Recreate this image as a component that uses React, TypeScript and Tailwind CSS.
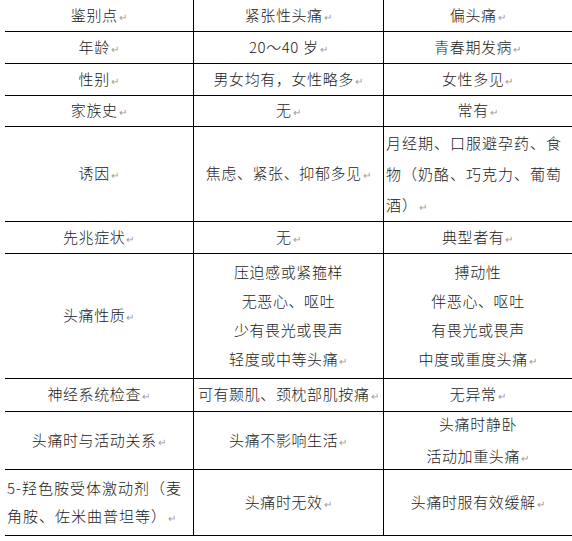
const mark = <span className="text-[10px] text-[#9a9a9a] ml-[1px]">↵</span>;

type Cell = { lines: string[]; align?: "center" | "left"; lh?: string };
type Row = { h: string; cells: Cell[] };

const rows: Row[] = [
    { h: "h-[32px]", cells: [{ lines: ["鉴别点"] }, { lines: ["紧张性头痛"] }, { lines: ["偏头痛"] }] },
    { h: "h-[32px]", cells: [{ lines: ["年龄"] }, { lines: ["20～40 岁"] }, { lines: ["青春期发病"] }] },
    { h: "h-[32px]", cells: [{ lines: ["性别"] }, { lines: ["男女均有，女性略多"] }, { lines: ["女性多见"] }] },
    { h: "h-[31px]", cells: [{ lines: ["家族史"] }, { lines: ["无"] }, { lines: ["常有"] }] },
    {
        h: "h-[95px]",
        cells: [
            { lines: ["诱因"] },
            { lines: ["焦虑、紧张、抑郁多见"] },
            { lines: ["月经期、口服避孕药、食", "物（奶酪、巧克力、葡萄", "酒）"], align: "left", lh: "leading-[31px]" },
        ],
    },
    { h: "h-[32px]", cells: [{ lines: ["先兆症状"] }, { lines: ["无"] }, { lines: ["典型者有"] }] },
    {
        h: "h-[125px]",
        cells: [
            { lines: ["头痛性质"] },
            { lines: ["压迫感或紧箍样", "无恶心、呕吐", "少有畏光或畏声", "轻度或中等头痛"], lh: "leading-[29px]" },
            { lines: ["搏动性", "伴恶心、呕吐", "有畏光或畏声", "中度或重度头痛"], lh: "leading-[29px]" },
        ],
    },
    { h: "h-[33px]", cells: [{ lines: ["神经系统检查"] }, { lines: ["可有颞肌、颈枕部肌按痛"] }, { lines: ["无异常"] }] },
    {
        h: "h-[58px]",
        cells: [
            { lines: ["头痛时与活动关系"] },
            { lines: ["头痛不影响生活"] },
            { lines: ["头痛时静卧", "活动加重头痛"], lh: "leading-[32px]" },
        ],
    },
    {
        h: "h-[66px]",
        cells: [
            { lines: ["5-羟色胺受体激动剂（麦", "角胺、佐米曲普坦等）"], align: "left", lh: "leading-[28px]" },
            { lines: ["头痛时无效"] },
            { lines: ["头痛时服有效缓解"] },
        ],
    },
];

export default function App() {
    return (
        <div className="w-[572px] h-[541px] bg-white pl-[5px] font-['Noto_Sans_CJK_SC',sans-serif] font-light text-[15px] text-[#1a1a1a]">
            <div className="grid grid-cols-[188px_190px_189px]">
                {rows.map((row, ri) =>
                    row.cells.map((cell, ci) => (
                        <div
                            key={`${ri}-${ci}`}
                            className={`${row.h} border-b border-black flex flex-col justify-center ${
                                ci > 0 ? "border-l" : ""
                            } ${cell.align === "left" ? "items-start pl-[2px] tracking-[1px]" : "items-center tracking-[0.6px]"} ${
                                cell.lh ?? "leading-[22px]"
                            }`}
                        >
                            {cell.lines.map((line, li) => (
                                <div key={li} className="whitespace-nowrap">
                                    {line}
                                    {li === cell.lines.length - 1 ? mark : null}
                                </div>
                            ))}
                        </div>
                    ))
                )}
            </div>
        </div>
    );
}
